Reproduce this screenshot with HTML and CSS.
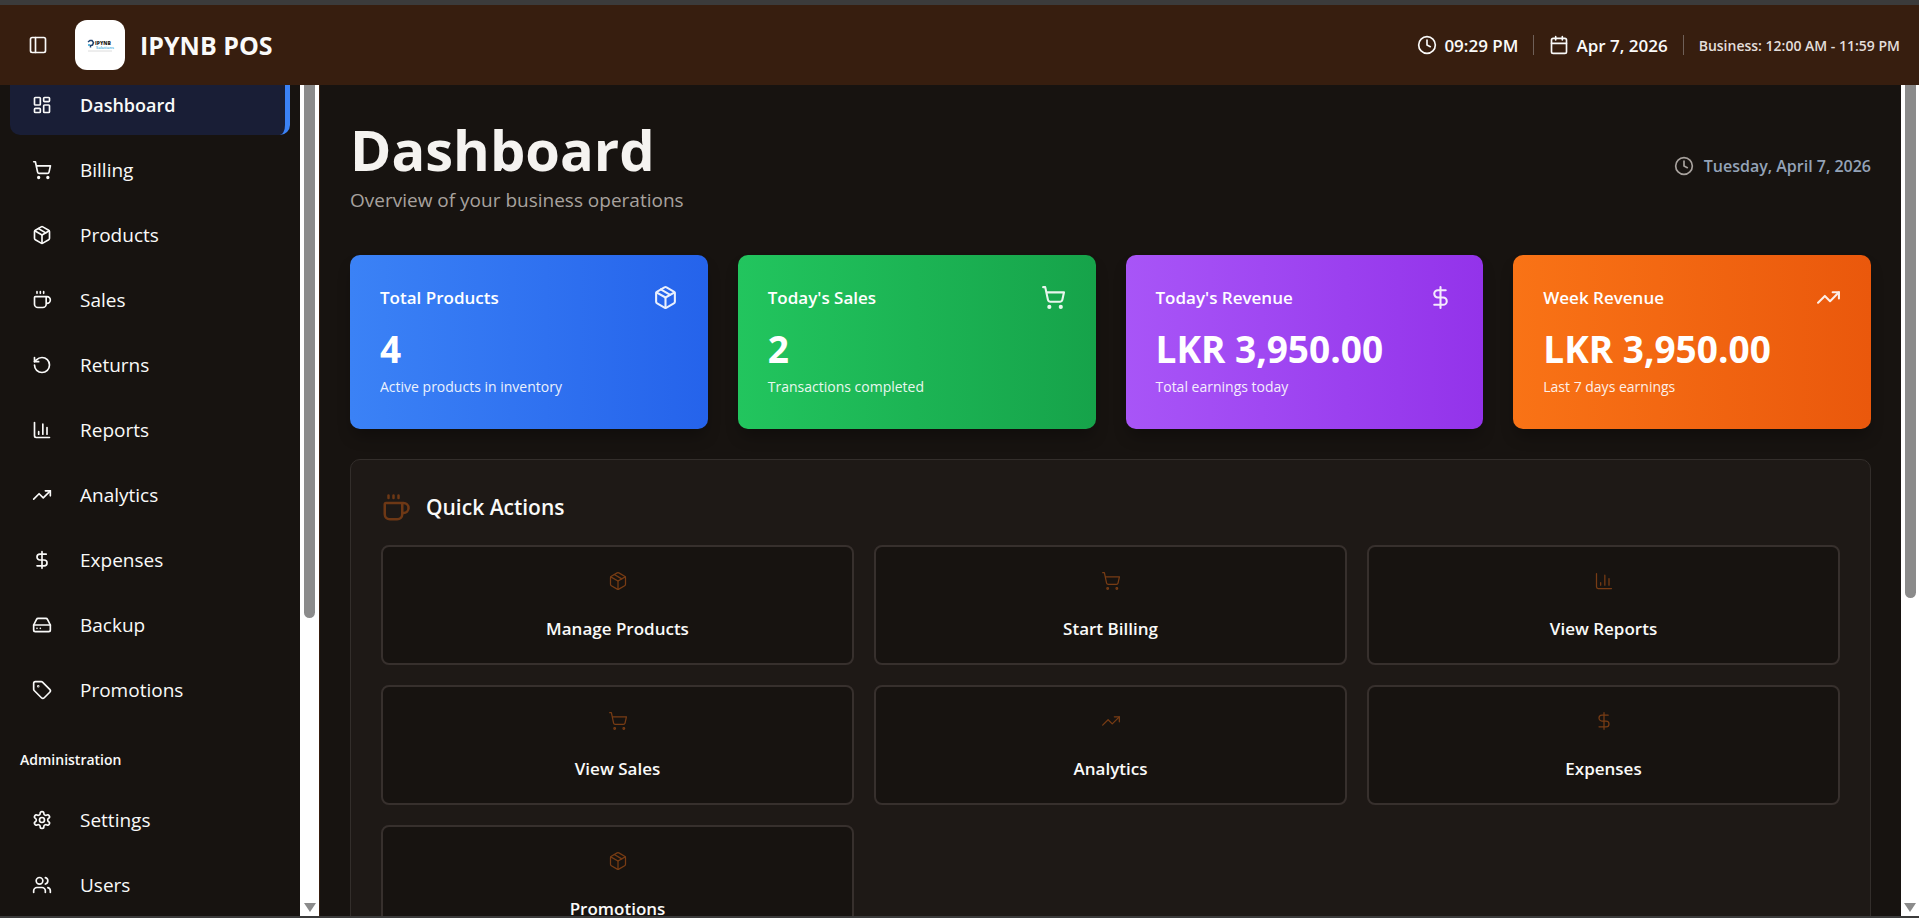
FILE: index.html
```html
<!DOCTYPE html>
<html lang="en">
<head>
  <meta charset="UTF-8" />
  <meta name="viewport" content="width=device-width, initial-scale=1.0"/>
  <title>IPYNB POS - Dashboard</title>
  <link rel="stylesheet" href="styles.css">
</head>
<body>
  <!-- Icon set -->
  <svg class="sprite" aria-hidden="true">
    <symbol id="i-panel" viewBox="0 0 24 24"><rect x="3" y="3" width="18" height="18" rx="2"/><path d="M9 3v18"/></symbol>
    <symbol id="i-clock" viewBox="0 0 24 24"><circle cx="12" cy="12" r="10"/><path d="M12 6v6l4 2"/></symbol>
    <symbol id="i-calendar" viewBox="0 0 24 24"><path d="M8 2v4M16 2v4M3 10h18"/><rect x="3" y="4" width="18" height="18" rx="2"/></symbol>
    <symbol id="i-dashboard" viewBox="0 0 24 24"><rect x="3" y="3" width="7" height="9" rx="1"/><rect x="14" y="3" width="7" height="5" rx="1"/><rect x="14" y="12" width="7" height="9" rx="1"/><rect x="3" y="16" width="7" height="5" rx="1"/></symbol>
    <symbol id="i-cart" viewBox="0 0 24 24"><circle cx="8" cy="21" r="1"/><circle cx="19" cy="21" r="1"/><path d="M2.05 2.05h2l2.66 12.42a2 2 0 0 0 2 1.58h9.78a2 2 0 0 0 1.95-1.57l1.65-7.43H5.12"/></symbol>
    <symbol id="i-package" viewBox="0 0 24 24"><path d="M11 21.73a2 2 0 0 0 2 0l7-4A2 2 0 0 0 21 16V8a2 2 0 0 0-1-1.73l-7-4a2 2 0 0 0-2 0l-7 4A2 2 0 0 0 3 8v8a2 2 0 0 0 1 1.73z"/><path d="M12 22V12"/><path d="M3.3 7l8.7 5 8.7-5"/><path d="M7.5 4.27l9 5.15"/></symbol>
    <symbol id="i-coffee" viewBox="0 0 24 24"><path d="M10 2v2M14 2v2M6 2v2"/><path d="M16 8a1 1 0 0 1 1 1v8a4 4 0 0 1-4 4H7a4 4 0 0 1-4-4V9a1 1 0 0 1 1-1h14a4 4 0 1 1 0 8h-1"/></symbol>
    <symbol id="i-return" viewBox="0 0 24 24"><path d="M3 12a9 9 0 1 0 9-9 9.75 9.75 0 0 0-6.74 2.74L3 8"/><path d="M3 3v5h5"/></symbol>
    <symbol id="i-chart" viewBox="0 0 24 24"><path d="M3 3v16a2 2 0 0 0 2 2h16"/><path d="M18 17V9M13 17V5M8 17v-3"/></symbol>
    <symbol id="i-trend" viewBox="0 0 24 24"><path d="M22 7l-8.5 8.5-5-5L2 17"/><path d="M16 7h6v6"/></symbol>
    <symbol id="i-dollar" viewBox="0 0 24 24"><path d="M12 2v20"/><path d="M17 5H9.5a3.5 3.5 0 0 0 0 7h5a3.5 3.5 0 0 1 0 7H6"/></symbol>
    <symbol id="i-drive" viewBox="0 0 24 24"><path d="M22 12H2"/><path d="M5.45 5.11L2 12v6a2 2 0 0 0 2 2h16a2 2 0 0 0 2-2v-6l-3.45-6.89A2 2 0 0 0 16.76 4H7.24a2 2 0 0 0-1.79 1.11z"/><path d="M6 16h.01M10 16h.01"/></symbol>
    <symbol id="i-tag" viewBox="0 0 24 24"><path d="M12.59 2.59A2 2 0 0 0 11.17 2H4a2 2 0 0 0-2 2v7.17a2 2 0 0 0 .59 1.42l8.7 8.7a2.43 2.43 0 0 0 3.42 0l6.58-6.58a2.43 2.43 0 0 0 0-3.42z"/><circle cx="7.5" cy="7.5" r=".5"/></symbol>
    <symbol id="i-settings" viewBox="0 0 24 24"><path d="M12.22 2h-.44a2 2 0 0 0-2 2v.18a2 2 0 0 1-1 1.73l-.43.25a2 2 0 0 1-2 0l-.15-.08a2 2 0 0 0-2.73.73l-.22.38a2 2 0 0 0 .73 2.73l.15.1a2 2 0 0 1 1 1.72v.51a2 2 0 0 1-1 1.74l-.15.09a2 2 0 0 0-.73 2.73l.22.38a2 2 0 0 0 2.73.73l.15-.08a2 2 0 0 1 2 0l.43.25a2 2 0 0 1 1 1.73V20a2 2 0 0 0 2 2h.44a2 2 0 0 0 2-2v-.18a2 2 0 0 1 1-1.73l.43-.25a2 2 0 0 1 2 0l.15.08a2 2 0 0 0 2.73-.73l.22-.39a2 2 0 0 0-.73-2.73l-.15-.08a2 2 0 0 1-1-1.74v-.5a2 2 0 0 1 1-1.74l.15-.09a2 2 0 0 0 .73-2.73l-.22-.38a2 2 0 0 0-2.73-.73l-.15.08a2 2 0 0 1-2 0l-.43-.25a2 2 0 0 1-1-1.73V4a2 2 0 0 0-2-2z"/><circle cx="12" cy="12" r="3"/></symbol>
    <symbol id="i-users" viewBox="0 0 24 24"><path d="M16 21v-2a4 4 0 0 0-4-4H6a4 4 0 0 0-4 4v2"/><circle cx="9" cy="7" r="4"/><path d="M22 21v-2a4 4 0 0 0-3-3.87M16 3.13a4 4 0 0 1 0 7.75"/></symbol>
  </svg>

  <header class="topbar">
    <button class="toggle" type="button" aria-label="Toggle sidebar"><svg class="icon"><use href="#i-panel"/></svg></button>
    <div class="logo">
      <svg viewBox="0 0 50 50" role="img" aria-label="IPYNB Solutions">
        <path d="M13 22l2-1.500h2l1.500 2-1 2.500-2 .5v2" fill="none" stroke="#1d3f6e" stroke-width="1.500"/>
        <circle cx="14" cy="25" r="1" fill="#2f9fd0"/>
        <text class="logo-name" x="20" y="25">IPYNB</text>
        <text class="logo-sub" x="21" y="29">Solutions</text>
        <path d="M13 31h24" stroke="#dcdcdc" stroke-width="1"/>
      </svg>
    </div>
    <span class="brand">IPYNB POS</span>
    <div class="status">
      <span class="status-item"><svg class="icon"><use href="#i-clock"/></svg>09:29 PM</span>
      <span class="divider"></span>
      <span class="status-item"><svg class="icon"><use href="#i-calendar"/></svg>Apr 7, 2026</span>
      <span class="divider"></span>
      <span class="hours">Business: 12:00 AM - 11:59 PM</span>
    </div>
  </header>

  <div class="layout">
    <aside class="sidebar">
      <nav class="nav">
        <a href="#" class="nav-item active"><svg class="icon"><use href="#i-dashboard"/></svg>Dashboard</a>
        <a href="#" class="nav-item"><svg class="icon"><use href="#i-cart"/></svg>Billing</a>
        <a href="#" class="nav-item"><svg class="icon"><use href="#i-package"/></svg>Products</a>
        <a href="#" class="nav-item"><svg class="icon"><use href="#i-coffee"/></svg>Sales</a>
        <a href="#" class="nav-item"><svg class="icon"><use href="#i-return"/></svg>Returns</a>
        <a href="#" class="nav-item"><svg class="icon"><use href="#i-chart"/></svg>Reports</a>
        <a href="#" class="nav-item"><svg class="icon"><use href="#i-trend"/></svg>Analytics</a>
        <a href="#" class="nav-item"><svg class="icon"><use href="#i-dollar"/></svg>Expenses</a>
        <a href="#" class="nav-item"><svg class="icon"><use href="#i-drive"/></svg>Backup</a>
        <a href="#" class="nav-item"><svg class="icon"><use href="#i-tag"/></svg>Promotions</a>
        <h2 class="nav-label">Administration</h2>
        <a href="#" class="nav-item"><svg class="icon"><use href="#i-settings"/></svg>Settings</a>
        <a href="#" class="nav-item"><svg class="icon"><use href="#i-users"/></svg>Users</a>
      </nav>
    </aside>
    <div class="scrollbar side" aria-hidden="true"><span class="thumb"></span><span class="arrow"></span></div>

    <main class="main">
      <div class="page-head">
        <div>
          <h1>Dashboard</h1>
          <p class="subtitle">Overview of your business operations</p>
        </div>
        <div class="date"><svg class="icon"><use href="#i-clock"/></svg>Tuesday, April 7, 2026</div>
      </div>

      <div class="stats">
        <section class="stat blue">
          <div class="stat-head"><h3>Total Products</h3><svg class="icon"><use href="#i-package"/></svg></div>
          <p class="value">4</p>
          <p class="note">Active products in inventory</p>
        </section>
        <section class="stat green">
          <div class="stat-head"><h3>Today's Sales</h3><svg class="icon"><use href="#i-cart"/></svg></div>
          <p class="value">2</p>
          <p class="note">Transactions completed</p>
        </section>
        <section class="stat purple">
          <div class="stat-head"><h3>Today's Revenue</h3><svg class="icon"><use href="#i-dollar"/></svg></div>
          <p class="value">LKR 3,950.00</p>
          <p class="note">Total earnings today</p>
        </section>
        <section class="stat orange">
          <div class="stat-head"><h3>Week Revenue</h3><svg class="icon"><use href="#i-trend"/></svg></div>
          <p class="value">LKR 3,950.00</p>
          <p class="note">Last 7 days earnings</p>
        </section>
      </div>

      <section class="panel">
        <h2 class="panel-title"><svg class="icon"><use href="#i-coffee"/></svg>Quick Actions</h2>
        <div class="actions">
          <button type="button" class="action"><svg class="icon"><use href="#i-package"/></svg>Manage Products</button>
          <button type="button" class="action"><svg class="icon"><use href="#i-cart"/></svg>Start Billing</button>
          <button type="button" class="action"><svg class="icon"><use href="#i-chart"/></svg>View Reports</button>
          <button type="button" class="action"><svg class="icon"><use href="#i-cart"/></svg>View Sales</button>
          <button type="button" class="action"><svg class="icon"><use href="#i-trend"/></svg>Analytics</button>
          <button type="button" class="action"><svg class="icon"><use href="#i-dollar"/></svg>Expenses</button>
          <button type="button" class="action"><svg class="icon"><use href="#i-package"/></svg>Promotions</button>
        </div>
      </section>
    </main>
    <div class="scrollbar page" aria-hidden="true"><span class="thumb"></span><span class="arrow"></span></div>
  </div>
</body>
</html>
```
FILE: styles.css
```css
* {
  box-sizing: border-box;
}
body {
  margin: 0;
  height: 100vh;
  display: flex;
  flex-direction: column;
  overflow: hidden;
  font-family: 'Segoe UI', 'Open Sans', 'Noto Sans', sans-serif;
  background-color: #171310;
  color: #fafaf9;
  border-top: 5px solid #3b3b3b;
  border-bottom: 2px solid #3b3b3b;
}
h1, h2, h3, p {
  margin: 0;
}
.sprite {
  display: none;
}
.icon {
  width: 20px;
  height: 20px;
  flex: none;
  fill: none;
  stroke: currentColor;
  stroke-width: 2;
  stroke-linecap: round;
  stroke-linejoin: round;
}

/* Header */
.topbar {
  display: flex;
  align-items: center;
  flex: none;
  height: 80px;
  padding: 0 19px 0 20px;
  background-color: #371e0f;
}
.toggle {
  display: flex;
  padding: 8px;
  margin-right: 19px;
  background: none;
  border: 0;
  color: #fafaf9;
}
.logo {
  width: 50px;
  height: 50px;
  border-radius: 12px;
  background-color: #fff;
}
.logo-name {
  font-size: 5px;
  font-weight: 800;
  fill: #222;
}
.logo-sub {
  font-size: 4px;
  font-weight: 600;
  fill: #35a9dc;
}
.brand {
  margin-left: 15px;
  font-size: 25px;
  font-weight: 700;
}
.status {
  display: flex;
  align-items: center;
  gap: 15px;
  margin-left: auto;
  font-size: 17px;
  font-weight: 600;
}
.status-item {
  display: flex;
  align-items: center;
  gap: 7px;
}
.divider {
  width: 1px;
  height: 20px;
  background-color: #6f6058;
}
.hours {
  font-size: 14px;
  color: #e3dedb;
}

/* Layout */
.layout {
  display: flex;
  flex: 1;
  min-height: 0;
}
.sidebar {
  flex: none;
  width: 300px;
  overflow: hidden;
}
.nav {
  display: flex;
  flex-direction: column;
  gap: 5px;
  margin-top: -10px;
  padding: 0 10px;
}
.nav-item {
  display: flex;
  align-items: center;
  gap: 28px;
  height: 60px;
  padding: 0 22px;
  border-radius: 10px;
  font-size: 19px;
  color: #fafaf9;
  text-decoration: none;
}
.nav-item.active {
  background-color: #191e36;
  border-right: 5px solid #3b82f6;
  font-size: 18px;
  font-weight: 600;
}
.nav-label {
  padding: 10px 10px 0;
  font-size: 14px;
  font-weight: 600;
  line-height: 50px;
}
.scrollbar {
  display: flex;
  flex-direction: column;
  align-items: center;
  justify-content: space-between;
  flex: none;
  width: 18px;
  padding-bottom: 4px;
  background-color: #fff;
}
.scrollbar.side {
  width: 20px;
  border-right: 1px solid #371e0f;
}
.thumb {
  width: 11px;
  height: 64.5%;
  border-radius: 0 0 6px 6px;
  background-color: #8b8b8b;
}
.page .thumb {
  height: 62%;
}
.arrow {
  border: 6px solid transparent;
  border-top: 9px solid #8b8b8b;
  border-bottom: 0;
}

/* Dashboard */
.main {
  flex: 1;
  min-width: 0;
  padding: 30px;
  overflow: hidden;
}
.page-head {
  display: flex;
  align-items: center;
  justify-content: space-between;
  margin-bottom: 38px;
}
h1 {
  font-size: 56px;
  line-height: 68px;
  font-weight: 700;
  color: #f5f3f0;
}
.subtitle {
  font-size: 19px;
  line-height: 34px;
  color: #a8a29e;
}
.date {
  display: flex;
  align-items: center;
  gap: 10px;
  font-size: 16px;
  font-weight: 600;
  color: #94a3b8;
}
.date .icon {
  color: #a8a29e;
}
.stats {
  display: grid;
  grid-template-columns: repeat(4, 1fr);
  gap: 30px;
  margin-bottom: 30px;
}
.stat {
  padding: 30px;
  border-radius: 10px;
  color: #fff;
  box-shadow: 0 10px 15px -3px rgba(0, 0, 0, 0.3);
}
.stat-head {
  display: flex;
  align-items: center;
  justify-content: space-between;
}
.stat-head .icon {
  width: 25px;
  height: 25px;
  opacity: 0.9;
}
.stat h3 {
  font-size: 17px;
  line-height: 25px;
  font-weight: 600;
}
.value {
  margin-top: 14px;
  font-size: 37px;
  line-height: 50px;
  font-weight: 700;
}
.note {
  font-size: 14px;
  line-height: 25px;
  opacity: 0.9;
}
.blue {
  background: linear-gradient(to right, #3b82f6, #2563eb);
}
.green {
  background: linear-gradient(to right, #22c55e, #16a34a);
}
.purple {
  background: linear-gradient(to right, #a855f7, #9333ea);
}
.orange {
  background: linear-gradient(to right, #f97316, #ea580c);
}

/* Quick actions */
.panel {
  padding: 30px;
  border: 1px solid #332e2b;
  border-radius: 10px;
  background-color: #1e1916;
}
.panel-title {
  display: flex;
  align-items: center;
  gap: 15px;
  margin-bottom: 20px;
  font-size: 21px;
  line-height: 35px;
  font-weight: 600;
}
.panel-title .icon {
  width: 30px;
  height: 30px;
  color: #6e3815;
}
.actions {
  display: grid;
  grid-template-columns: repeat(3, 1fr);
  gap: 20px;
}
.action {
  display: flex;
  flex-direction: column;
  align-items: center;
  justify-content: center;
  gap: 26px;
  height: 120px;
  border: 2px solid #37302d;
  border-radius: 8px;
  background-color: #171310;
  color: #fafaf9;
  font-family: inherit;
  font-size: 17px;
  font-weight: 600;
}
.action .icon {
  color: #783c14;
  stroke-width: 1.5;
}
```
